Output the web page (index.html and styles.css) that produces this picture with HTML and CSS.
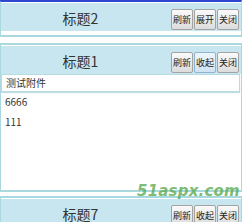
FILE: index.html
```html
<!DOCTYPE html>
<html lang="zh-CN">
<head>
    <meta charset="UTF-8">
    <title>面板</title>
    <link rel="stylesheet" href="styles.css">
</head>
<body>
    <div class="panels">
        <div class="panel active">
            <div class="panel-head">
                <div class="panel-title">标题2</div>
                <div class="tools">
                    <button>刷新</button><button>展开</button><button>关闭</button>
                </div>
            </div>
        </div>

        <div class="panel">
            <div class="panel-head">
                <div class="panel-title">标题1</div>
                <div class="tools">
                    <button>刷新</button><button class="hover">收起</button><button>关闭</button>
                </div>
            </div>
            <div class="panel-body">
                <div class="attach">测试附件</div>
                <div class="item">6666</div>
                <div class="item">111</div>
            </div>
        </div>

        <div class="panel">
            <div class="panel-head">
                <div class="panel-title">标题7</div>
                <div class="tools">
                    <button>刷新</button><button>收起</button><button>关闭</button>
                </div>
            </div>
        </div>

        <div class="mark">51aspx.com</div>
    </div>
</body>
</html>
```

FILE: styles.css
```css
body {
    margin: 0;
    font-family: "Noto Sans CJK SC", "Noto Sans", sans-serif;
    color: #333;
    background: #fff;
    overflow: hidden;
}

.panels {
    position: relative;
    margin: 0 5px 0 -1px;
}

.panel {
    border: 2px solid #a9d8df;
    border-right-width: 1px;
    padding: 1px 0 4px;
    margin-bottom: 4px;
}

.panel.active {
    border-top-color: #2f45d4;
    margin-bottom: 6px;
}

.panel-head {
    display: flex;
    align-items: flex-end;
    height: 28px;
    background: #c8e6ef;
}

.panel-title {
    flex: 1;
    align-self: center;
    text-align: center;
    font-size: 14px;
    line-height: 20px;
    padding: 1px 10px 0 0;
}

.tools {
    display: flex;
    padding: 0 2px 1px 0;
}

button {
    width: 22px;
    height: 21px;
    margin-left: 1px;
    padding: 0;
    font-family: "Noto Sans CJK SC", sans-serif;
    font-size: 9px;
    color: #222;
    border: 1px solid #a3a3a3;
    border-radius: 2px;
    background: linear-gradient(#fafafa, #dcdcdc);
}

button.hover {
    border-color: #8fb3d0;
    background: linear-gradient(#eef6fc, #cfe3f3);
}

.panel-body {
    height: 112px;
    padding-right: 1px;
}

.attach {
    font-size: 10px;
    line-height: 16px;
    padding-left: 4px;
    border: 1px solid #b6dbe2;
    box-shadow: 0 1px 1px #c8dde2;
}

.item {
    font-size: 10px;
    line-height: 20px;
    padding-left: 4px;
}

.mark {
    position: absolute;
    left: 138px;
    top: 182px;
    font-family: "DejaVu Sans", sans-serif;
    font-size: 15px;
    font-weight: bold;
    font-style: italic;
    letter-spacing: 0.2px;
    color: rgba(92, 170, 80, 0.8);
}
```
